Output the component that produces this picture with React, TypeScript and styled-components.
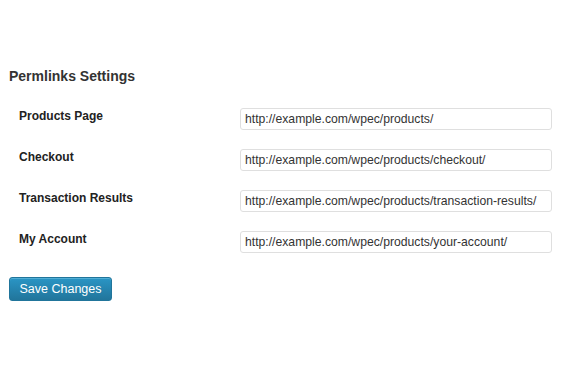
import styled, { createGlobalStyle } from "styled-components";

const GlobalStyle = createGlobalStyle`
  html, body {
    margin: 0;
    padding: 0;
    background: #fff;
  }
  body {
    font-family: "Liberation Sans", Arial, sans-serif;
    color: #333;
  }
`;

const fields = [
  { label: "Products Page", value: "http://example.com/wpec/products/" },
  { label: "Checkout", value: "http://example.com/wpec/products/checkout/" },
  {
    label: "Transaction Results",
    value: "http://example.com/wpec/products/transaction-results/",
  },
  { label: "My Account", value: "http://example.com/wpec/products/your-account/" },
];

export default function App() {
  return (
    <>
      <GlobalStyle />
      <Page>
        <Heading>Permlinks Settings</Heading>
        <Form>
          {fields.map((f) => (
            <Row key={f.label}>
              <Label>{f.label}</Label>
              <Field type="text" defaultValue={f.value} />
            </Row>
          ))}
        </Form>
        <SaveButton type="button">Save Changes</SaveButton>
      </Page>
    </>
  );
}

const Page = styled.div`
  padding: 68px 0 0 9px;
  width: 543px;
`;
const Heading = styled.h3`
  margin: 0 0 23px;
  font-size: 14px;
  font-weight: bold;
  line-height: 17px;
  color: #333;
`;
const Form = styled.div`
  display: flex;
  flex-direction: column;
  gap: 19px;
  margin-bottom: 24px;
`;
const Row = styled.div`
  display: grid;
  grid-template-columns: 231px 1fr;
  align-items: start;
`;
const Label = styled.div`
  padding: 0 0 0 10px;
  font-size: 12px;
  font-weight: bold;
  line-height: 16px;
  color: #222;
`;
const Field = styled.input`
  box-sizing: border-box;
  width: 312px;
  height: 22px;
  margin: 0;
  padding: 0 4px;
  border: 1px solid #dfdfdf;
  border-radius: 3px;
  background: #fff;
  font-family: "Liberation Sans", Arial, sans-serif;
  font-size: 12.2px;
  color: #333;
  outline: none;
`;
const SaveButton = styled.button`
  box-sizing: border-box;
  width: 103px;
  height: 24px;
  padding: 0;
  border: 1px solid #21759b;
  border-radius: 3px;
  background: linear-gradient(to bottom, #2a95c5, #21759b);
  box-shadow: inset 0 1px 0 rgba(120, 200, 230, 0.5);
  color: #fff;
  font-family: "Liberation Sans", Arial, sans-serif;
  font-size: 12.5px;
  line-height: 22px;
  cursor: pointer;
`;
